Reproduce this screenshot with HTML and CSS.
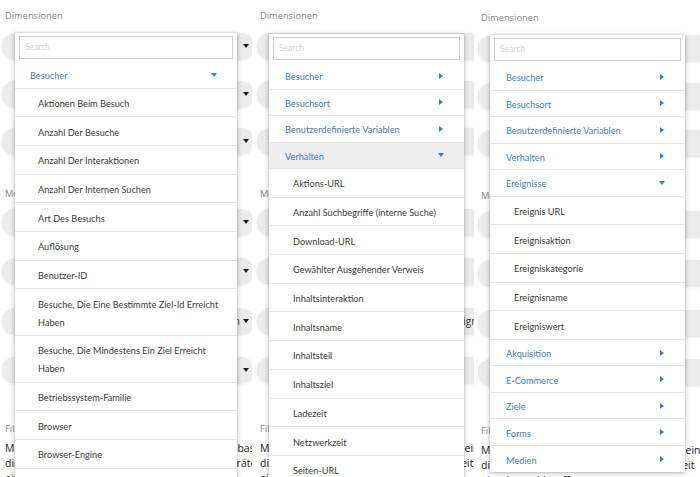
FILE: index.html
```html
<!DOCTYPE html>
<html lang="de">
<head>
<meta charset="utf-8">
<title>Dimensionen</title>
<link rel="stylesheet" href="styles.css">
</head>
<body>
<div class="screens">

  <section class="panel p1">
    <div class="bg">
      <div class="lbl">Dimensionen</div>
      <div class="pills">
        <div class="pill"><span class="caret"></span></div>
        <div class="pill"><span class="caret"></span></div>
        <div class="pill"><span class="caret"></span></div>
      </div>
      <div class="lbl lbl-m">Metriken</div>
      <div class="pills pills-b">
        <div class="pill"><span class="caret"></span></div>
        <div class="pill"><span class="caret"></span></div>
        <div class="pill"><span class="val">Besuch</span><span class="caret"></span></div>
        <div class="pill"><span class="caret"></span></div>
      </div>
      <div class="lbl lbl-f">Filter</div>
      <p class="para"><span>Mit Filtern können Sie alle Berichte eingrenzen, basierend</span><span>die Besuche nach Land, Stadt, Browser oder Gerätetyp</span><span>eine Auswahl treffen</span></p>
    </div>
    <div class="menu m1">
      <div class="search">Search</div>
      <div class="cat open"><span>Besucher</span><i class="tri-down"></i></div>
      <div class="item">Aktionen Beim Besuch</div>
      <div class="item">Anzahl Der Besuche</div>
      <div class="item">Anzahl Der Interaktionen</div>
      <div class="item">Anzahl Der Internen Suchen</div>
      <div class="item">Art Des Besuchs</div>
      <div class="item">Auflösung</div>
      <div class="item">Benutzer-ID</div>
      <div class="item">Besuche, Die Eine Bestimmte Ziel-Id Erreicht Haben</div>
      <div class="item">Besuche, Die Mindestens Ein Ziel Erreicht Haben</div>
      <div class="item">Betriebssystem-Familie</div>
      <div class="item">Browser</div>
      <div class="item">Browser-Engine</div>
      <div class="item">Browser-Version</div>
    </div>
  </section>

  <section class="panel p2">
    <div class="bg">
      <div class="lbl">Dimensionen</div>
      <div class="pills">
        <div class="pill"><span class="caret"></span></div>
        <div class="pill"><span class="caret"></span></div>
        <div class="pill"><span class="caret"></span></div>
      </div>
      <div class="lbl lbl-m">Metriken</div>
      <div class="pills pills-b">
        <div class="pill"><span class="caret"></span></div>
        <div class="pill"><span class="caret"></span></div>
        <div class="pill"><span class="val val-left">Ereignisse</span><span class="caret"></span></div>
        <div class="pill"><span class="caret"></span></div>
      </div>
      <div class="lbl lbl-f">Filter</div>
      <p class="para"><span>Mit Filtern können Sie die Berichte gezielt eingrenzen</span><span>die Besuche nach Land, Stadt, Browser, Zeit</span><span>eine Auswahl treffen</span></p>
    </div>
    <div class="menu m2">
      <div class="search">Search</div>
      <div class="cat"><span>Besucher</span><i class="tri-right"></i></div>
      <div class="cat"><span>Besuchsort</span><i class="tri-right"></i></div>
      <div class="cat"><span>Benutzerdefinierte Variablen</span><i class="tri-right"></i></div>
      <div class="cat open hover"><span>Verhalten</span><i class="tri-down"></i></div>
      <div class="item">Aktions-URL</div>
      <div class="item">Anzahl Suchbegriffe (interne Suche)</div>
      <div class="item">Download-URL</div>
      <div class="item">Gewählter Ausgehender Verweis</div>
      <div class="item">Inhaltsinteraktion</div>
      <div class="item">Inhaltsname</div>
      <div class="item">Inhaltsteil</div>
      <div class="item">Inhaltsziel</div>
      <div class="item">Ladezeit</div>
      <div class="item">Netzwerkzeit</div>
      <div class="item">Seiten-URL</div>
    </div>
  </section>

  <section class="panel p3">
    <div class="bg">
      <div class="lbl">Dimensionen</div>
      <div class="pills">
        <div class="pill"><span class="caret"></span></div>
        <div class="pill"><span class="caret"></span></div>
        <div class="pill"><span class="caret"></span></div>
      </div>
      <div class="lbl lbl-m">Metriken</div>
      <div class="pills pills-b">
        <div class="pill"><span class="caret"></span></div>
        <div class="pill"><span class="caret"></span></div>
        <div class="pill"><span class="caret"></span></div>
        <div class="pill"><span class="caret"></span></div>
      </div>
      <div class="lbl lbl-f">Filter</div>
      <p class="para"><span>Mit Filtern können Sie die Berichte gezielt eingrenzen</span><span>die Besuche nach Land, Stadt, Browser, Zeit</span><span>eine Auswahl treffen</span></p>
    </div>
    <div class="menu m3">
      <div class="search">Search</div>
      <div class="cat"><span>Besucher</span><i class="tri-right"></i></div>
      <div class="cat"><span>Besuchsort</span><i class="tri-right"></i></div>
      <div class="cat"><span>Benutzerdefinierte Variablen</span><i class="tri-right"></i></div>
      <div class="cat"><span>Verhalten</span><i class="tri-right"></i></div>
      <div class="cat open"><span>Ereignisse</span><i class="tri-down"></i></div>
      <div class="item">Ereignis URL</div>
      <div class="item">Ereignisaktion</div>
      <div class="item">Ereigniskategorie</div>
      <div class="item">Ereignisname</div>
      <div class="item">Ereigniswert</div>
      <div class="cat"><span>Akquisition</span><i class="tri-right"></i></div>
      <div class="cat"><span>E-Commerce</span><i class="tri-right"></i></div>
      <div class="cat"><span>Ziele</span><i class="tri-right"></i></div>
      <div class="cat"><span>Forms</span><i class="tri-right"></i></div>
      <div class="cat last"><span>Medien</span><i class="tri-right"></i></div>
    </div>
  </section>

</div>
</body>
</html>
```

FILE: styles.css
```css
* { box-sizing: border-box; }

html, body {
  margin: 0;
  padding: 0;
  background: #ffffff;
}

body {
  font-family: "Open Sans", "Noto Sans", sans-serif;
  color: #333;
}

.screens {
  display: flex;
  width: 700px;
  height: 477px;
  overflow: hidden;
}

.panel {
  position: relative;
  flex: none;
  height: 477px;
  overflow: hidden;
  background: #fff;
}

.p1 { width: 252px; }
.p2 { width: 222px; }
.p3 { width: 226px; }

/* ---------- background form ---------- */
.bg {
  padding: 8px 0 0 5px;
}
.p2 .bg { padding-left: 8px; }
.p3 .bg { padding: 10px 0 0 7px; }

.lbl {
  font-size: 9.3px;
  line-height: 16px;
  color: #878787;
  white-space: nowrap;
}

.lbl-m { margin-top: 32px; color: #7d879a; }
.lbl-f { margin-top: 38px; }

.pills {
  display: flex;
  flex-direction: column;
  gap: 21.5px;
  margin-top: 9px;
  margin-left: -3px;
}

.pills-b {
  gap: 23.3px;
  margin-top: 7px;
}

.pill {
  width: 252px;
  height: 26px;
  border-radius: 13px;
  background: #ebebeb;
  box-shadow: 0 1px 3px rgba(0, 0, 0, 0.12);
  display: flex;
  align-items: center;
  justify-content: flex-end;
  gap: 3px;
  padding: 0 5px 0 12px;
}

.caret {
  width: 0;
  height: 0;
  border-left: 3.5px solid transparent;
  border-right: 3.5px solid transparent;
  border-top: 4px solid #1e1e1e;
}

.val {
  font-size: 10px;
  color: #333;
  white-space: nowrap;
}

.val-left {
  margin-right: auto;
  padding-left: 197px;
}

.para {
  margin: 4.5px 0 0 0;
  font-size: 10.5px;
  line-height: 15px;
  color: #222;
  display: flex;
  flex-direction: column;
  white-space: nowrap;
}

/* ---------- dropdown menu ---------- */
.menu {
  position: absolute;
  background: #fff;
  padding-top: 4px;
  box-shadow: 0 1px 5px rgba(0, 0, 0, 0.28), 0 0 2px rgba(0, 0, 0, 0.12);
  font-family: "Lato", "Open Sans", sans-serif;
  font-size: 9.2px;
}

.m1 { top: 33px; left: 15px; width: 222px; }
.m2 { top: 34px; left: 17px; width: 195px; }
.m3 { top: 35px; left: 16px; width: 195px; }

.search {
  height: 23px;
  margin: -1.5px 4px 3.5px 4px;
  border: 1px solid #cfcfcf;
  padding-left: 5px;
  font-size: 8.5px;
  line-height: 21px;
  color: #d3d3d3;
}

.cat {
  display: flex;
  align-items: center;
  justify-content: space-between;
  height: 26.5px;
  padding: 2px 20px 0 16px;
  border-bottom: 1px solid #e6e6e6;
  color: #3d7fc0;
}

.m1 .cat { padding-left: 15px; }

.cat.hover { background: #eeeeee; }
.cat.last { border-bottom: none; }

.item {
  padding: 6.35px 16px 3.35px 24px;
  line-height: 18px;
  border-bottom: 1px solid #e6e6e6;
  color: #3b3b3b;
}

.m1 .item { padding-left: 23px; }

.tri-right {
  width: 0;
  height: 0;
  border-top: 3.5px solid transparent;
  border-bottom: 3.5px solid transparent;
  border-left: 4.5px solid #3d7fc0;
  margin-right: 1px;
  margin-top: -2px;
}

.tri-down {
  width: 0;
  height: 0;
  border-left: 3px solid transparent;
  border-right: 3px solid transparent;
  border-top: 4px solid #3d7fc0;
  margin-top: -2px;
}
```
